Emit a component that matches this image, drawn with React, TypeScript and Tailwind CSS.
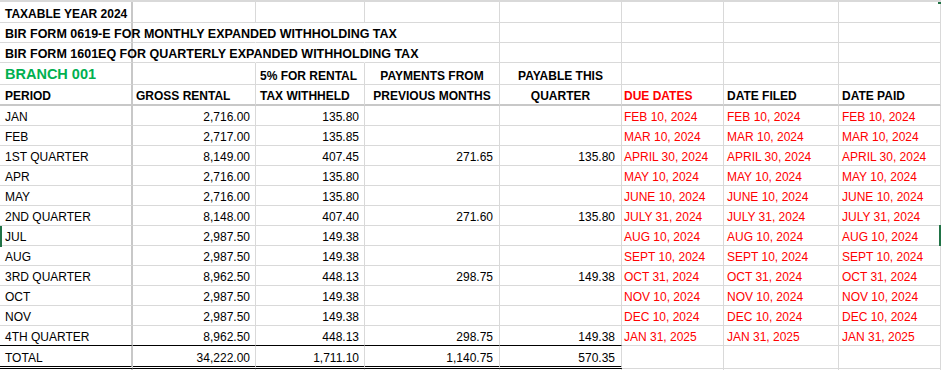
import React from 'react';

type Row = {
  period: string;
  gross: string;
  tax: string;
  prev?: string;
  payable?: string;
  date: string;
};

const ROWS: Row[] = [
  { period: 'JAN', gross: '2,716.00', tax: '135.80', date: 'FEB 10, 2024' },
  { period: 'FEB', gross: '2,717.00', tax: '135.85', date: 'MAR 10, 2024' },
  { period: '1ST QUARTER', gross: '8,149.00', tax: '407.45', prev: '271.65', payable: '135.80', date: 'APRIL 30, 2024' },
  { period: 'APR', gross: '2,716.00', tax: '135.80', date: 'MAY 10, 2024' },
  { period: 'MAY', gross: '2,716.00', tax: '135.80', date: 'JUNE 10, 2024' },
  { period: '2ND QUARTER', gross: '8,148.00', tax: '407.40', prev: '271.60', payable: '135.80', date: 'JULY 31, 2024' },
  { period: 'JUL', gross: '2,987.50', tax: '149.38', date: 'AUG 10, 2024' },
  { period: 'AUG', gross: '2,987.50', tax: '149.38', date: 'SEPT 10, 2024' },
  { period: '3RD QUARTER', gross: '8,962.50', tax: '448.13', prev: '298.75', payable: '149.38', date: 'OCT 31, 2024' },
  { period: 'OCT', gross: '2,987.50', tax: '149.38', date: 'NOV 10, 2024' },
  { period: 'NOV', gross: '2,987.50', tax: '149.38', date: 'DEC 10, 2024' },
  { period: '4TH QUARTER', gross: '8,962.50', tax: '448.13', prev: '298.75', payable: '149.38', date: 'JAN 31, 2025' },
];

const GRID = 'grid grid-cols-[133px_123px_109px_135px_122px_102px_115px_102px]';

// one spreadsheet cell; text sits at the bottom like Excel does
const Cell = ({
  children,
  className = '',
}: {
  children?: React.ReactNode;
  className?: string;
}) => (
  <div
    className={`flex items-end pb-[1px] leading-[14px] whitespace-nowrap border-r border-b border-[#d9d9d9] ${className}`}
  >
    {children}
  </div>
);

// first column carries the frozen pane line
const colA = 'border-r-2 border-r-[#c8c8c8] pl-[5px] overflow-visible';

export default function App() {
  return (
    <div className="relative w-[941px] h-[370px] overflow-hidden bg-white text-[12px] text-black font-['Liberation_Sans',Arial,sans-serif] border-t-2 border-[#d9d9d9]">
      {/* title rows */}
      <div className={`${GRID} h-[21px]`}>
        <Cell className={`${colA} font-bold`}>TAXABLE YEAR 2024</Cell>
        <Cell />
        <Cell />
        <Cell />
        <Cell />
        <Cell />
        <Cell />
        <Cell />
      </div>
      <div className={`${GRID} h-[20px]`}>
        <Cell className={`${colA} font-bold text-[12.5px]`}>BIR FORM 0619-E FOR MONTHLY EXPANDED WITHHOLDING TAX</Cell>
        <Cell className="border-r-transparent" />
        <Cell className="border-r-transparent" />
        <Cell />
        <Cell />
        <Cell />
        <Cell />
        <Cell />
      </div>
      <div className={`${GRID} h-[20px]`}>
        <Cell className={`${colA} font-bold text-[12.5px]`}>BIR FORM 1601EQ FOR QUARTERLY EXPANDED WITHHOLDING TAX</Cell>
        <Cell className="border-r-transparent" />
        <Cell className="border-r-transparent" />
        <Cell />
        <Cell />
        <Cell />
        <Cell />
        <Cell />
      </div>

      {/* column headers */}
      <div className={`${GRID} h-[22px] font-bold`}>
        <Cell className={`${colA} text-[14.5px] leading-[17px] text-[#00b050]`}>BRANCH 001</Cell>
        <Cell />
        <Cell className="pl-[4px]">5% FOR RENTAL</Cell>
        <Cell className="justify-center">PAYMENTS FROM</Cell>
        <Cell className="justify-center">PAYABLE THIS</Cell>
        <Cell />
        <Cell />
        <Cell />
      </div>
      <div className={`${GRID} h-[21px] font-bold`}>
        <Cell className={`${colA} border-b-2 border-b-[#c8c8c8]`}>PERIOD</Cell>
        <Cell className="pl-[3px] border-b-2 border-b-[#c8c8c8]">GROSS RENTAL</Cell>
        <Cell className="pl-[4px] border-b-2 border-b-[#c8c8c8]">TAX WITHHELD</Cell>
        <Cell className="justify-center border-b-2 border-b-[#c8c8c8]">PREVIOUS MONTHS</Cell>
        <Cell className="justify-center border-b-2 border-b-[#c8c8c8]">QUARTER</Cell>
        <Cell className="pl-[2px] text-[#ff0000] border-b-2 border-b-[#c8c8c8]">DUE DATES</Cell>
        <Cell className="pl-[3px] border-b-2 border-b-[#c8c8c8]">DATE FILED</Cell>
        <Cell className="pl-[3px] border-b-2 border-b-[#c8c8c8]">DATE PAID</Cell>
      </div>

      {/* monthly / quarterly rows */}
      {ROWS.map((r, i) => {
        const last = i === ROWS.length - 1 ? 'border-b-black' : '';
        return (
          <div key={r.period} className={`${GRID} h-[20px]`}>
            <Cell className={`${colA} ${last}`}>{r.period}</Cell>
            <Cell className={`justify-end pr-[5px] ${last}`}>{r.gross}</Cell>
            <Cell className={`justify-end pr-[5px] ${last}`}>{r.tax}</Cell>
            <Cell className={`justify-end pr-[6px] ${last}`}>{r.prev}</Cell>
            <Cell className={`justify-end pr-[6px] ${last}`}>{r.payable}</Cell>
            <Cell className="pl-[2px] text-[#ff0000]">{r.date}</Cell>
            <Cell className="pl-[3px] text-[#ff0000]">{r.date}</Cell>
            <Cell className="pl-[3px] text-[#ff0000]">{r.date}</Cell>
          </div>
        );
      })}

      {/* total */}
      <div className={`${GRID} h-[23px]`}>
        <Cell className={`${colA} border-b-[3px] border-double border-b-black`}>TOTAL</Cell>
        <Cell className="justify-end pr-[5px] border-b-[3px] border-double border-b-black">34,222.00</Cell>
        <Cell className="justify-end pr-[5px] border-b-[3px] border-double border-b-black">1,711.10</Cell>
        <Cell className="justify-end pr-[6px] border-b-[3px] border-double border-b-black">1,140.75</Cell>
        <Cell className="justify-end pr-[6px] border-b-[3px] border-double border-b-black">570.35</Cell>
        <Cell />
        <Cell />
        <Cell />
      </div>
      <div className={`${GRID} h-[20px]`}>
        <Cell className={colA} />
        <Cell />
        <Cell />
        <Cell />
        <Cell />
        <Cell />
        <Cell />
        <Cell />
      </div>

      {/* selection markers at the window edges */}
      <div className="absolute left-0 top-[224px] w-[2px] h-[21px] bg-[#217346]" />
      <div className="absolute right-0 top-[223px] w-[2px] h-[21px] bg-[#217346]" />
      <div className="absolute right-0 -top-[2px] w-[3px] h-[4px] bg-[#217346]" />
    </div>
  );
}
